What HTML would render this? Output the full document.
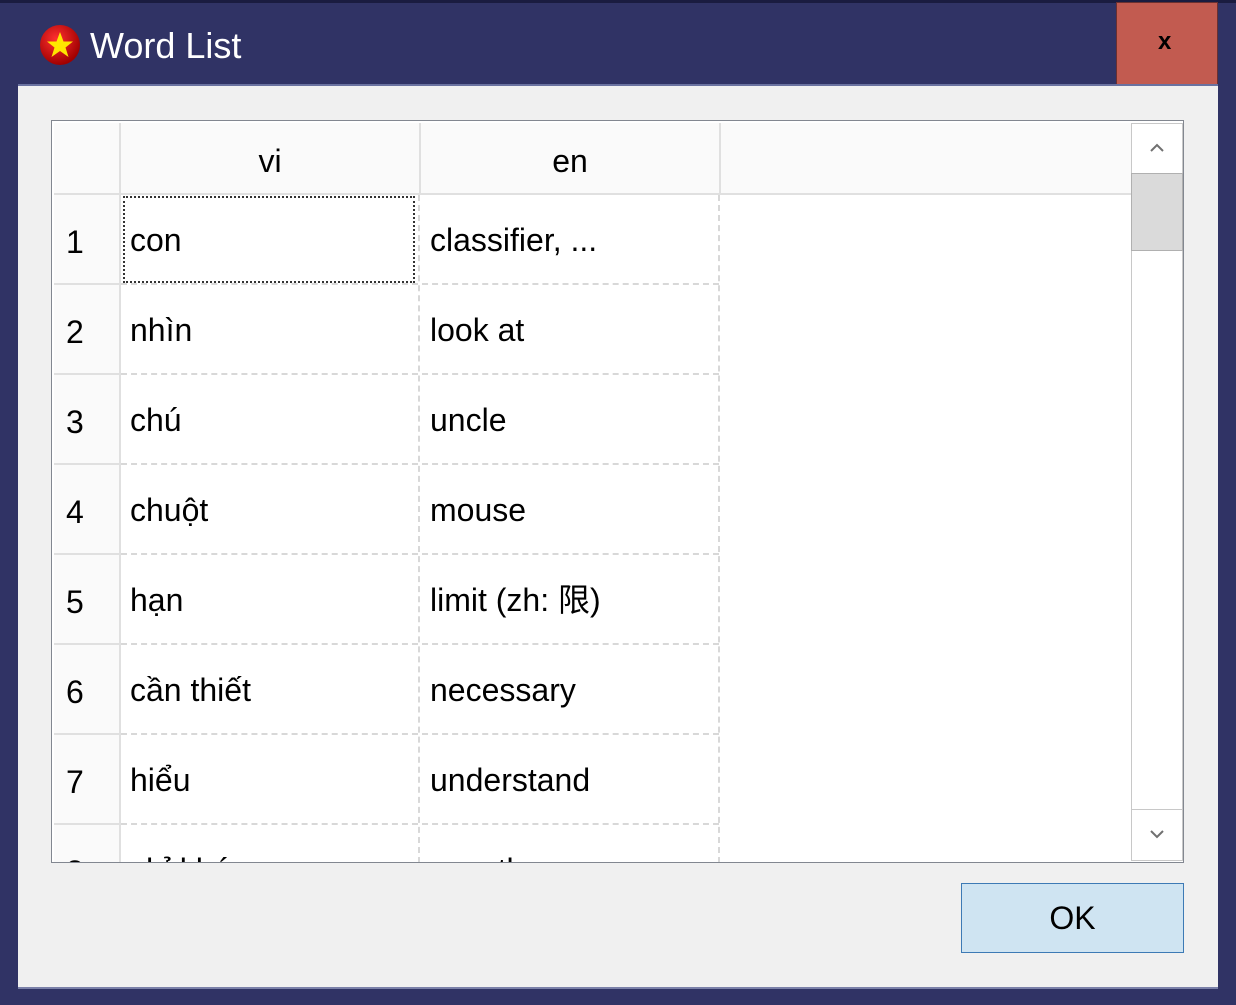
<!DOCTYPE html>
<html><head><meta charset="utf-8"><style>
*{margin:0;padding:0;box-sizing:border-box}
body{width:1236px;height:1005px;background:#303365;position:relative;overflow:hidden;font-family:"Liberation Sans","Noto Sans CJK SC",sans-serif}
.a{position:absolute}
.t{font-size:32px;color:#000;line-height:40px}
</style></head><body>
<div class="a" style="left:0;top:0;width:1236px;height:3px;background:#1a1c40"></div>
<svg class="a" style="left:39px;top:24px" width="42" height="42" viewBox="0 0 42 42">
<defs><radialGradient id="g" cx="40%" cy="35%" r="65%"><stop offset="0" stop-color="#ff3030"/><stop offset="1" stop-color="#a00000"/></radialGradient></defs>
<circle cx="21" cy="21" r="20" fill="url(#g)"/>
<polygon fill="#ffe600" points="21,8 24.5,17.5 34,17.5 26.5,23.5 29.5,33 21,27 12.5,33 15.5,23.5 8,17.5 17.5,17.5"/>
</svg>
<div class="a" style="left:90px;top:24px;font-size:36px;color:#fff;line-height:44px">Word List</div>
<div class="a" style="left:1116px;top:2px;width:102px;height:84px;background:#c25b50;border:1px solid #6a3030"></div>
<div class="a" style="left:1158px;top:28px;font-size:24px;font-weight:bold;color:#000">x</div>
<div class="a" style="left:18px;top:84px;width:1200px;height:2px;background:#6a72a0"></div>
<div class="a" style="left:18px;top:86px;width:1200px;height:901px;background:#f0f0f0"></div>
<div class="a" style="left:18px;top:987px;width:1200px;height:2px;background:#7a80a8"></div>

<div class="a" style="left:51px;top:120px;width:1133px;height:743px;border:1px solid #828790;background:#fff;overflow:hidden">
 <div class="a" style="left:2px;top:2px;width:1078px;height:72px;background:#fafafa;border-bottom:2px solid #e0e0e0"></div>
 <div class="a" style="left:67px;top:2px;width:2px;height:740px;background:#e0e0e0"></div>
 <div class="a" style="left:367px;top:2px;width:2px;height:72px;background:#e0e0e0"></div>
 <div class="a" style="left:667px;top:2px;width:2px;height:72px;background:#e0e0e0"></div>
 <div class="a t" style="left:69px;width:298px;top:20px;text-align:center">vi</div>
 <div class="a t" style="left:369px;width:298px;top:20px;text-align:center">en</div>
 <div class="a" style="left:2px;top:74px;width:65px;height:668px;background:#fafafa"></div>
 <div class="a" style="left:366px;top:74px;border-left:2px dashed #d8d8d8;height:668px"></div>
 <div class="a" style="left:666px;top:74px;border-left:2px dashed #d8d8d8;height:668px"></div>
 <div id="rows"></div>
 <div class="a" style="left:71px;top:75px;width:292px;height:87px;border:2px dotted #333;background:#fff"></div>
 <div class="a t" style="left:78px;top:99px">con</div>
 <!-- scrollbar -->
 <div class="a" style="left:1079px;top:2px;width:52px;height:738px;background:#fff;border:1px solid #c8c8c8"></div>
 <div class="a" style="left:1079px;top:52px;width:52px;height:78px;background:#dadada;border:1px solid #b0b0b0"></div>
 <div class="a" style="left:1079px;top:688px;width:52px;height:1px;background:#c8c8c8"></div>
 <svg class="a" style="left:1097px;top:22px" width="16" height="10"><path d="M2 8 L8 2 L14 8" stroke="#707070" stroke-width="2" fill="none"/></svg>
 <svg class="a" style="left:1097px;top:708px" width="16" height="10"><path d="M2 2 L8 8 L14 2" stroke="#707070" stroke-width="2" fill="none"/></svg>
</div>

<div class="a" style="left:961px;top:883px;width:223px;height:70px;background:#cfe4f2;border:1px solid #3d7ab5"></div>
<div class="a t" style="left:961px;width:223px;top:898px;text-align:center">OK</div>

<script>
var d=[["con","classifier, ..."],["nhìn","look at"],["chú","uncle"],["chuột","mouse"],["hạn","limit (zh: 限)"],["cần thiết","necessary"],["hiểu","understand"],["chỉ khác","exactly ..."]];
var h="";
for(var i=0;i<8;i++){var y=74+90*i;
 h+='<div class="a t" style="left:14px;top:'+(y+27)+'px">'+(i+1)+'</div>';
 if(i>0)h+='<div class="a t" style="left:78px;top:'+(y+25)+'px">'+d[i][0]+'</div>';
 h+='<div class="a t" style="left:378px;top:'+(y+25)+'px">'+d[i][1]+'</div>';
 var s=y+88;
 h+='<div class="a" style="left:2px;top:'+s+'px;width:65px;height:2px;background:#e0e0e0"></div>';
 h+='<div class="a" style="left:69px;top:'+s+'px;width:598px;border-top:2px dashed #d8d8d8"></div>';
}
document.getElementById("rows").innerHTML=h;
</script>
</body></html>
